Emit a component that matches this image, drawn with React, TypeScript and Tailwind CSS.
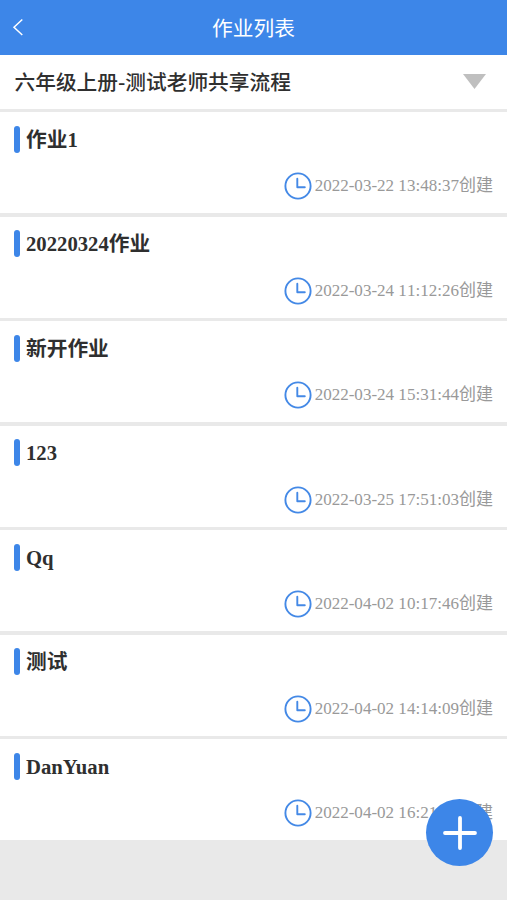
type Homework = {
  title: string;
  createdAt: string;
};

const homeworks: Homework[] = [
  { title: "作业1", createdAt: "2022-03-22 13:48:37" },
  { title: "20220324作业", createdAt: "2022-03-24 11:12:26" },
  { title: "新开作业", createdAt: "2022-03-24 15:31:44" },
  { title: "123", createdAt: "2022-03-25 17:51:03" },
  { title: "Qq", createdAt: "2022-04-02 10:17:46" },
  { title: "测试", createdAt: "2022-04-02 14:14:09" },
  { title: "DanYuan", createdAt: "2022-04-02 16:21:35" },
];

function ClockIcon() {
  return (
    <svg className="size-7 shrink-0" viewBox="0 0 28 28" fill="none" stroke="#4489e6" strokeWidth="1.9">
      <circle cx="14" cy="14" r="12.6" />
      <path d="M13.3 6.8V15.2H20.8" strokeLinecap="round" strokeLinejoin="round" />
    </svg>
  );
}

function HomeworkCard({ title, createdAt }: Homework) {
  return (
    <li className="flex h-[101px] flex-col justify-between bg-white pt-[13.5px] pr-3.5 pb-[13px] pl-3.5">
      <div className="flex h-[27px] items-center">
        <span className="h-[27px] w-[5.5px] rounded-full bg-[#3d86e8]" />
        <h2 className="ml-[6.5px] pt-[2.4px] text-[20.7px] leading-[27px] font-bold text-[#2f2f2f]">{title}</h2>
      </div>
      <div className="flex items-center justify-end">
        <ClockIcon />
        <span className="ml-[3px] text-[17.05px] leading-7 text-[#999] [font-kerning:none]">{createdAt}创建</span>
      </div>
    </li>
  );
}

export default function App() {
  return (
    <main className="relative h-[900px] w-full overflow-hidden bg-[#e9e9e9] font-['Liberation_Serif','Noto_Sans_CJK_SC',serif]">
      <header className="grid h-[54.5px] grid-cols-[1fr_auto_1fr] items-center bg-[#3d86e8] font-['Noto_Sans_CJK_SC',sans-serif] text-white">
        <button type="button" aria-label="返回" className="pl-3">
          <svg className="h-[18px] w-3" viewBox="0 0 12 18" fill="none" stroke="currentColor" strokeWidth="1.5">
            <path d="M10.3 1.5L2 9.3L10.3 17" />
          </svg>
        </button>
        <h1 className="text-[20.7px] leading-7">作业列表</h1>
      </header>

      <button
        type="button"
        className="flex h-[54px] w-full items-center justify-between bg-white pr-[21px] pl-[14.5px] font-['Noto_Sans_CJK_SC',sans-serif] text-[20.7px] font-medium text-[#2f2f2f]"
      >
        六年级上册-测试老师共享流程
        <svg className="h-[15px] w-[23px]" viewBox="0 0 23 15" fill="#bfbfbf">
          <path d="M0 0H23L11.5 15Z" />
        </svg>
      </button>

      <ul className="mt-[3.5px] flex flex-col gap-[3.5px]">
        {homeworks.map((item) => (
          <HomeworkCard key={item.createdAt} {...item} />
        ))}
      </ul>

      <button
        type="button"
        aria-label="新建作业"
        className="absolute top-[799px] left-[426px] flex size-[67px] items-center justify-center rounded-full bg-[#3d86e8]"
      >
        <svg className="size-[34px]" viewBox="0 0 34 34" stroke="#fff" strokeWidth="3.8" strokeLinecap="round">
          <path d="M17 2V32M2 17H32" />
        </svg>
      </button>
    </main>
  );
}
